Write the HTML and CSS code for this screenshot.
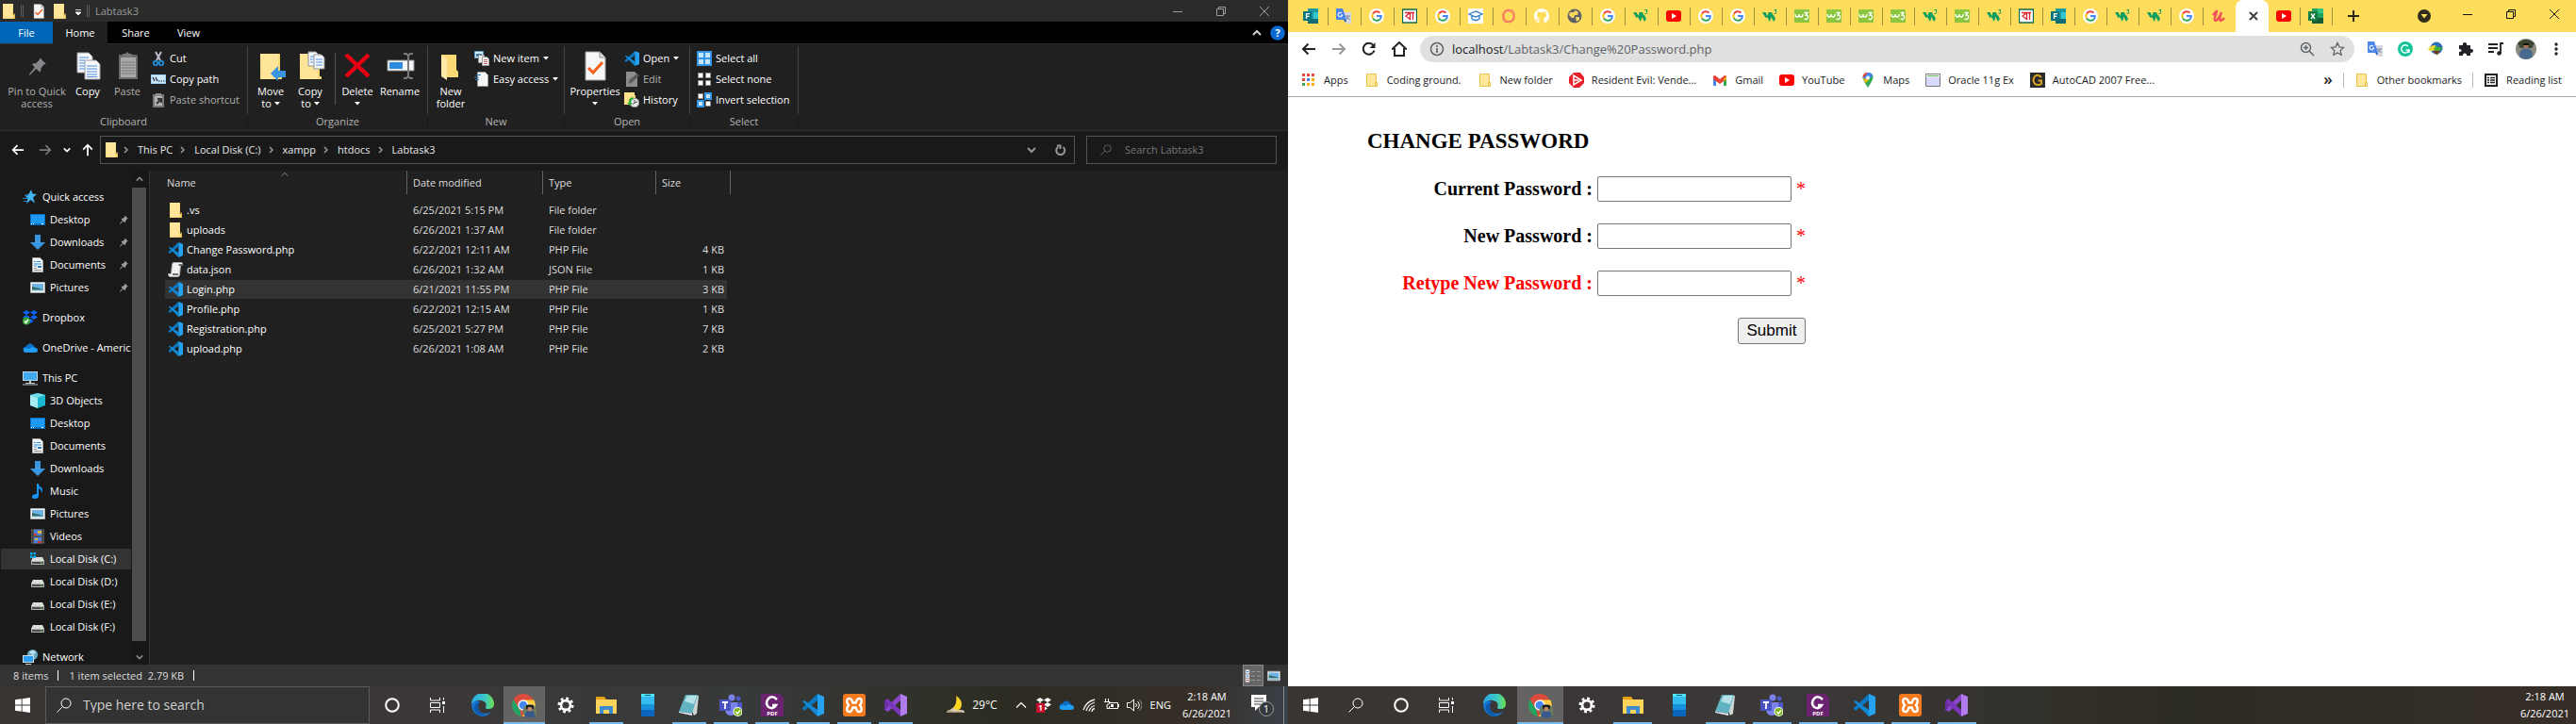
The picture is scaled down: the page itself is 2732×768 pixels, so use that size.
FILE: index.html
```html
<!DOCTYPE html>
<html lang="en">
<head>
<meta charset="utf-8">
<title>Labtask3 – Change Password</title>
<link rel="stylesheet" href="styles.css">
</head>
<body>
<svg class="paints" aria-hidden="true"><linearGradient id="eg"><stop offset="0" stop-color="#2ba6e3"/><stop offset=".6" stop-color="#3bc9c9"/><stop offset="1" stop-color="#6ade4a"/></linearGradient></svg>
<svg class="sprite" aria-hidden="true">
  <symbol id="folder" viewBox="0 0 16 16"><path d="M2 0h11v12h1.500v4H2z" fill="#f6d673"/><path d="M2 0h10.500v16H3z" fill="#ffe69a"/><path d="M12 11h2.500v5H3" fill="none" stroke="#e3b94a"/></symbol>
  <symbol id="bfolder" viewBox="0 0 16 16"><path d="M2.500 1.500h10v9h1v4h-11z" fill="#ffe79b" stroke="#e8c24b"/><path d="M11.500 14v-3.500h2" fill="none" stroke="#e8c24b"/></symbol>
  <symbol id="doccheck" viewBox="0 0 32 32"><path d="M6 1h15l6 6v24H6z" fill="#f5f6f8" stroke="#9a9da1"/><path d="M21 1v6h6" fill="#ddd" stroke="#8a8d91"/><path d="m9 18 5 5 10-11" fill="none" stroke="#f4611b" stroke-width="3"/></symbol>
  <symbol id="pin" viewBox="0 0 32 32"><path d="m20 4 9 9-3 1-4 5-1 6-6-5-9 9-1-1 8-10-4-5 6-1 5-5z" fill="currentColor"/></symbol>
  <symbol id="copy" viewBox="0 0 32 32"><g fill="#f7f8fa" stroke="#9fa2a6"><path d="M5 2h12l4 4v17H5z"/><path d="M13 10h12l4 4v16H13z"/></g><g stroke="#4a8ee6" stroke-width="1"><path d="M7 7h10M7 10h6M7 13h6M7 16h6M7 19h6M15 16h11M15 19h11M15 22h11M15 25h11M15 27.500h11"/></g></symbol>
  <symbol id="paste" viewBox="0 0 32 32"><path d="M7 4h18q2 0 2 2v24H7z" fill="#6a6a6c"/><rect x="9" y="7" width="16" height="21" fill="#a8a8aa"/><path d="M11 3h3l2-2 2 2h3v4H11z" fill="#77787a"/><path d="M10 12h14M10 15h14M10 18h14M10 21h14M10 24h14" stroke="#77787a"/></symbol>
  <symbol id="cut" viewBox="0 0 16 16"><path d="m5 1 5 9M11 1 6 10" stroke="#b9bec4" stroke-width="2"/><circle cx="5" cy="13" r="2.200" fill="none" stroke="#1f84c6" stroke-width="2"/><circle cx="11" cy="13" r="2.200" fill="none" stroke="#1f84c6" stroke-width="2"/></symbol>
  <symbol id="copypath" viewBox="0 0 16 16"><rect y="3" width="16" height="10" fill="#9ed0f5"/><rect x="1" y="4" width="14" height="8" fill="#c9e8fd"/><path d="m2 6 2 4M5 6l2 4M8 10h1.500M10.500 10H12M13 10h1.500" stroke="#16202a" stroke-width="1.200"/></symbol>
  <symbol id="pasteshort" viewBox="0 0 16 16"><path d="M2 2h12v14H2z" fill="#77787a"/><path d="M4 4h8v10H4z" fill="#b0b0b2"/><path d="M5 1h6v3H5z" fill="#8d8e90"/><path d="m6 12 4-4M7 7h4v4" fill="none" stroke="#333" stroke-width="2"/></symbol>
  <symbol id="bigfolder" viewBox="0 0 32 32"><path d="M5 3h21v24h2v3H5z" fill="#f9d975"/><path d="M5 3h19v27H6z" fill="#ffe597"/></symbol>
  <symbol id="moveto" viewBox="0 0 32 32"><use href="#bigfolder"/><path d="m16 24 8-8v5h8v7h-8v4z" fill="#3a94e0"/></symbol>
  <symbol id="copyto" viewBox="0 0 32 32"><use href="#bigfolder"/><g fill="#f7f8fa" stroke="#8e9196"><path d="M14 1h8l3 3v12H14z"/><path d="M20 4h8l3 3v12H20z"/></g><path d="M22 9h7M22 12h7M22 15h7M16 6h4M16 9h3M16 12h3" stroke="#4a8ee6"/></symbol>
  <symbol id="delete" viewBox="0 0 32 32"><path d="M4 4l24 23M28 4 4 27" stroke="#e60012" stroke-width="4.500"/></symbol>
  <symbol id="rename" viewBox="0 0 32 32"><path d="M3 10h28v11H3z" fill="#f5f6f8" stroke="#8d8f92"/><path d="M5 12h14v7H5z" fill="#2f8be0"/><path d="M20 3h3l2 2 2-2h3M25 5v22M20 29h3l2-2 2 2h3" fill="none" stroke="#77797c" stroke-width="2"/></symbol>
  <symbol id="newfolder" viewBox="0 0 32 32"><path d="M6 4h16v16l2 2v6H10z" fill="#f9d975"/><path d="m6 4 6 4v23l-6-4z" fill="#ffe9a8"/></symbol>
  <symbol id="newitem" viewBox="0 0 16 16"><path d="M.500.500h9v7h-9z" fill="#d4ecfb" stroke="#5e9cc8"/><path d="M2 3h6v3H2z" fill="#3a7aa6"/><path d="M4.500 4.500h6v8h-6z" fill="#ececec" stroke="#999"/><path d="M8.500 6.500h5l2 2v7h-7z" fill="#fafafa" stroke="#999"/><path d="M10 9.500h4M10 11.500h4M10 13.500h4" stroke="#c66"/></symbol>
  <symbol id="easy" viewBox="0 0 16 16"><path d="M3.500.500h8l3 3v12h-11z" fill="#f5f6f8" stroke="#999"/><path d="M2 3.500h5M0 6h5M1 8.500h4" stroke="#2b78b8"/></symbol>
  <symbol id="vscode" viewBox="0 0 24 24"><path d="M17 0v7L3 18l-2-2v-1z" fill="#0a77c0"/><path d="m1 8 2-1 14 10v7z" fill="#1289d6"/><path d="m17 0 7 3v18l-7 3z" fill="#26a3f0"/></symbol>
  <symbol id="edit" viewBox="0 0 16 16"><path d="M2 0h9l3 3v13H2z" fill="#8c8c8c"/><path d="m4 13 2-5 8-6 2 2-7 7z" fill="#5b5b5b"/></symbol>
  <symbol id="history" viewBox="0 0 16 16"><path d="M0 0h11v3h1v10H0z" fill="#ffe18a"/><circle cx="11" cy="11" r="4.800" fill="#e4e6e8" stroke="#8a8c8f"/><path d="M11 8v3l3-1M9 13l2-2" stroke="#555" fill="none"/><path d="M9 5Q4 6 5 11H3l3 3 3-3H7Q7 8 10 7z" fill="#2cae34"/></symbol>
  <symbol id="selall" viewBox="0 0 16 16"><path d="M0 0h16v16H0z" fill="#3596e6"/><path d="M2 2h5v5H2zM9 2h5v5H9zM2 9h5v5H2zM9 9h5v5H9z" fill="#c5e5fc"/></symbol>
  <symbol id="selnone" viewBox="0 0 16 16"><path d="M1.500 1.500h5v5h-5zM9.500 1.500h5v5h-5zM1.500 9.500h5v5h-5zM9.500 9.500h5v5h-5z" fill="#fff" stroke="#8f8f8f"/></symbol>
  <symbol id="selinv" viewBox="0 0 16 16"><path d="M1.500 1.500h5v5h-5zM9.500 9.500h5v5h-5z" fill="#fff" stroke="#8f8f8f"/><path d="M9 1h6v6H9zM1 9h6v6H1z" fill="#c5e5fc" stroke="#3596e6" stroke-width="2"/></symbol>
  <symbol id="star4" viewBox="0 0 16 16"><path d="m9 0 1.500 4.500L15 5l-4 3.500 2 6L8.500 11 4 15l1.500-5.500L2 6l4.500-1z" fill="#45b4f5"/><path d="M0 9.500h5M1 12.500h4M2 6.500h4" stroke="#1b7fc8"/></symbol>
  <symbol id="desktop" viewBox="0 0 16 16"><path d="M0 2h16v12H0z" fill="#0b6fc0"/><path d="M1 3h14v9H1z" fill="#1e9bf7"/><path d="M1 12.500h1M3 12.500h1M12 12.500h2" stroke="#fff"/></symbol>
  <symbol id="down" viewBox="0 0 16 16"><path d="M5 0h6v8h5l-8 8-8-8h5z" fill="#3b97e3"/></symbol>
  <symbol id="document" viewBox="0 0 16 16"><path d="M2.500.500h8l3 3v12h-11z" fill="#f8f8f8" stroke="#a7a7a7"/><path d="M4 4.500h2M7 4.500h4M4 7h8M4 9h3" stroke="#1e8bdc"/><path d="M8 9h4v2H8z" fill="#2b7bb5"/><path d="M4 11.500h3M4 13.500h8" stroke="#888"/></symbol>
  <symbol id="picture" viewBox="0 0 16 16"><path d="M.500 2.500h15v11H.500z" fill="#f4f4f4" stroke="#aaa"/><path d="M2 4h12v8H2z" fill="#6fb2e6"/><path d="m2 7 12 3v2H2z" fill="#2f6d66"/><path d="M2 10.500h12V12H2z" fill="#a9d4f1"/></symbol>
  <symbol id="dropbox" viewBox="0 0 16 16"><path d="m4 0 4 2.500L4 5 0 2.500zM12 0l4 2.500L12 5 8 2.500zM4 5l4 2.500L4 10 0 7.500zM12 5l4 2.500-4 2.500-4-2.500zM8 9l4 2.500L8 14l-4-2.500z" fill="currentColor"/></symbol>
  <symbol id="dropok" viewBox="0 0 16 16"><g color="#0b63f3"><use href="#dropbox"/></g><circle cx="4" cy="11.500" r="4" fill="#37a635"/><path d="m2 11.500 1.500 2L6 10" stroke="#fff" fill="none" stroke-width="1.500"/></symbol>
  <symbol id="onedrive" viewBox="0 0 16 16"><path d="M4 6q3-5 7-1l3 3-12 4Q-2 8 4 6z" fill="#0a6cc4"/><path d="M3 13q-3-1-2-3.500Q4 7 7 9q2-3 6-1 3 0 3 2.500T13 13z" fill="#1f9df0"/></symbol>
  <symbol id="pc" viewBox="0 0 16 16"><path d="M0 1h16v10H0z" fill="#c3d4df"/><path d="M1 2h14v8H1z" fill="#3fa9f5"/><path d="M7 11h2v2h4v1H3v-1h4z" fill="#c3cbd0"/><path d="M0 15h16" stroke="#b7c3cc"/></symbol>
  <symbol id="cube" viewBox="0 0 16 16"><path d="m8 0 8 2v11l-8 3-8-3V2z" fill="#19b7d0"/><path d="m8 5-8-3v11l8 3z" fill="#a8ecf3"/><path d="m0 2 8-2 8 2-8 3z" fill="#6fdbe8"/></symbol>
  <symbol id="note" viewBox="0 0 16 16"><path d="M7 0h2q0 3 3 4 2 3 0 6 0-4-3-5v8q0 3-4 3-3 0-3-2 0-3 5-3z" fill="#1795f5"/></symbol>
  <symbol id="video" viewBox="0 0 16 16"><path d="M1 0h14v16H1z" fill="#565656"/><path d="M4 1h8v6H4zM4 9h8v6H4z" fill="#4a7fe0"/><path d="M4 5h3v2H4zM8 13h4v2H8z" fill="#c93a3a"/><path d="M8 2h4v3H8zM5 10h3v2H5z" fill="#d9b53a"/><path d="M2.500 0v16M13.500 0v16" stroke="#222" stroke-dasharray="1.500 1.500"/></symbol>
  <symbol id="disk" viewBox="0 0 16 16"><path d="m3 6h10l2 4H1z" fill="#dcdcdc"/><path d="M1 10h14v4H1z" fill="#b4b4b4"/><path d="M2 11h12v2H2z" fill="#4b4b4b"/><path d="M11 12h1.500" stroke="#4df04d"/></symbol>
  <symbol id="diskc" viewBox="0 0 16 16"><use href="#disk"/><path d="M0 1h2.500v2.500H0zM3.500 1H6v2.500H3.500zM0 4.500h2.500V7H0zM3.500 4.500H6V7H3.500z" fill="#00b3f0"/></symbol>
  <symbol id="network" viewBox="0 0 16 16"><circle cx="10.500" cy="5.500" r="5.500" fill="#6aa9c4"/><path d="M7 3q4-4 7 0l-3 3z" fill="#b9e0ee"/><path d="M0 6h12v8H0z" fill="#d1dde5"/><path d="M1 7h10v6H1z" fill="#2a9df4"/><path d="M3 15.500h6" stroke="#ccc"/></symbol>
  <symbol id="json" viewBox="0 0 16 16"><path d="M6.500.500h8q1.500 0 1 3h-2l-1 10q-.500 2-2 2h-8q-2 0-2-3h3L4.500 3q0-2.500 2-2.500z" fill="#f2f2f2" stroke="#aaa"/><path d="M5 13h6M11.500 3h4" stroke="#444" stroke-width="1.500"/></symbol>
  <symbol id="search" viewBox="0 0 16 16"><circle cx="10" cy="6" r="5" fill="none" stroke="currentColor"/><path d="m6.500 9.500-6 6" stroke="currentColor"/></symbol>
  <symbol id="chevd" viewBox="0 0 10 10"><path d="m1 3 4 4 4-4" fill="none" stroke="currentColor" stroke-width="2"/></symbol>
  <symbol id="chevu" viewBox="0 0 10 10"><path d="m1 7 4-4 4 4" fill="none" stroke="currentColor" stroke-width="2"/></symbol>
  <symbol id="thinu" viewBox="0 0 12 12"><path d="m1 8.500 5-5 5 5" fill="none" stroke="currentColor" stroke-width="1.200"/></symbol>
  <symbol id="chevr" viewBox="0 0 10 10"><path d="m3 2 3 3-3 3" fill="none" stroke="currentColor" stroke-width="1.500"/></symbol>
  <symbol id="caret" viewBox="0 0 6 6"><path d="M0 1h6L3 4.500z" fill="currentColor"/></symbol>
  <symbol id="qatmenu" viewBox="0 0 8 8"><path d="M1 1.500h6M1 4h6L4 7z" fill="currentColor" stroke="currentColor" stroke-width=".8"/></symbol>
  <symbol id="arrow" viewBox="0 0 16 16"><path d="M15 8H2M7.500 2.500 2 8l5.500 5.500" fill="none" stroke="currentColor" stroke-width="2"/></symbol>
  <symbol id="min" viewBox="0 0 10 10"><path d="M0 5.500h10" stroke="currentColor"/></symbol>
  <symbol id="restore" viewBox="0 0 10 10"><path d="M.500 2.500h7v7h-7zM2.500 2.500v-2h7v7h-2" fill="none" stroke="currentColor"/></symbol>
  <symbol id="close" viewBox="0 0 10 10"><path d="m0 0 10 10M10 0 0 10" stroke="currentColor"/></symbol>
  <symbol id="reload" viewBox="0 0 16 16"><path d="M13.500 9.500A6 6 0 1 1 12.500 4" fill="none" stroke="currentColor" stroke-width="2"/><path d="M14.500 1v6h-6z" fill="currentColor"/></symbol>
  <symbol id="home" viewBox="0 0 16 16"><path d="M0 8.500 8 1l8 7.500M3 7v8h10V7" fill="none" stroke="currentColor" stroke-width="2"/></symbol>
  <symbol id="refresh" viewBox="0 0 12 12"><path d="M3 3a4.500 4.500 0 1 0 5.500 0M2 1.500h3.500V5" fill="none" stroke="currentColor" stroke-width="2"/></symbol>
  <symbol id="win" viewBox="0 0 16 16"><path d="m0 2.300 6.700-1v6.200H0zM7.600 1.200 16 0v7.500H7.600zM0 8.500h6.700v6.200L0 13.700zM7.600 8.500H16V16l-8.400-1.200z" fill="#fff"/></symbol>
  <symbol id="cortana" viewBox="0 0 16 16"><circle cx="8" cy="8" r="6.800" fill="none" stroke="#fff" stroke-width="2"/></symbol>
  <symbol id="taskview" viewBox="0 0 16 16"><path d="M.500 0v3h10V0M.500 5.500h10v5H.500zM.500 16v-3h10v3M14.500 0v2.500M14.500 9v7" fill="none" stroke="#fff"/><path d="M13 4h3v3h-3z" fill="#fff"/></symbol>
  <symbol id="edge" viewBox="0 0 24 24"><path d="M0 11A12 12 0 0 1 24 11q0 5-6 5-3 0-3-1.500 2-5-3-7Q6 5 0 11z" fill="url(#eg)"/><path d="M0 12Q3 6 9 8q-4 5 0 11 4 4 12 0-4 5-10 5Q1 22 0 12z" fill="#1678d4"/><path d="M9 8q-3 3-2 7 2 7 9 8-8 2-12-4Q0 12 9 8z" fill="#0d59ab"/></symbol>
  <symbol id="chrome" viewBox="0 0 24 24"><circle cx="11" cy="12" r="11" fill="#dd4b3e"/><path d="M1.500 6.500 8 17l1 6A11 11 0 0 1 1.500 6.500z" fill="#1fa463"/><path d="M11 7h10.500A11 11 0 0 1 10 23l6-9z" fill="#ffcd40"/><circle cx="11" cy="12" r="5.200" fill="#fff"/><circle cx="11" cy="12" r="4" fill="#4587f3"/><g><circle cx="17.500" cy="18" r="7" fill="#6c7a62"/><path d="M12.500 23q0-6 5-6t5 6q-5 4-10 0z" fill="#37598c"/><path d="M14 12h7v4h-7z" fill="#181818"/><circle cx="17.500" cy="16" r="2.300" fill="#b98865"/></g></symbol>
  <symbol id="gear" viewBox="0 0 20 20"><circle cx="10" cy="10" r="5.500" fill="none" stroke="#fff" stroke-width="3"/><circle cx="10" cy="10" r="8" fill="none" stroke="#fff" stroke-width="3" stroke-dasharray="3.140 3.140"/></symbol>
  <symbol id="explorer" viewBox="0 0 24 24"><path d="M1 3h9l2 3h11v4H1z" fill="#e2a012"/><path d="M1 6h22v15H1z" fill="#fcd35b"/><path d="M5 13h14v8h-4v-4H9v4H5z" fill="#3d8bd0"/></symbol>
  <symbol id="phone" viewBox="0 0 24 24"><path d="M5 0h14v24H5z" fill="#0a66bd"/><path d="M5 0h14v17H5z" fill="#1791dc"/><path d="M5 0h14v11H5z" fill="#33bdf0"/><path d="M5 0h14v3H5z" fill="#50e4f7"/><path d="M9 1.500h6" stroke="#0b5a8a"/></symbol>
  <symbol id="notepad" viewBox="0 0 24 24"><path d="M8 2h14l-2 19-3 2z" fill="#cdd5d6"/><path d="M8 1h13l-6 20-14-2z" fill="#62b3c2"/><path d="M10 2h10l-3 9-10-3z" fill="#b5e0e6"/><path d="m1 19 14 2v2L1 20z" fill="#f1f1f1"/></symbol>
  <symbol id="teams" viewBox="0 0 24 24"><circle cx="13" cy="4" r="3.500" fill="#7b83eb"/><circle cx="20" cy="5" r="2.500" fill="#5059c9"/><path d="M17 9h7v7q-2 4-6 3z" fill="#5059c9"/><path d="M7 9h12v8q-2 6-7 6t-6-6z" fill="#7b83eb"/><path d="M0 6h12v12H0z" fill="#4b53bc"/><path d="M3 9h6M6 9v7" stroke="#fff" stroke-width="1.800"/><circle cx="19.500" cy="19" r="5" fill="#fff"/><circle cx="19.500" cy="19" r="4" fill="#7cb518"/><path d="m17.500 19 1.500 2 3-3.500" stroke="#fff" fill="none" stroke-width="1.500"/></symbol>
  <symbol id="foxit" viewBox="0 0 24 24"><path d="M0 0h20l4 4v20H0z" fill="#6b2370"/><path d="M17 6Q12 1 8 5q-4 5 0 9 5 3 8-2h-4" fill="none" stroke="#fff" stroke-width="2.500"/><text x="12" y="23" text-anchor="middle" font-family="Open Sans" font-weight="700" font-size="6" fill="#fff">PDF</text></symbol>
  <symbol id="xampp" viewBox="0 0 24 24"><rect width="24" height="24" rx="3" fill="#f47a20"/><path d="M5 5.500q3-1.500 4.500 1.500l1 2.500h3l1-2.500Q16 4 19 5.500q2 2.500-1 6.500 3 4 1 6.500-3 1.500-4.500-1.500l-1-2.500h-3l-1 2.500Q8 20 5 18.500q-2-2.500 1-6.500-3-4-1-6.500z" fill="none" stroke="#fff" stroke-width="2.500"/></symbol>
  <symbol id="vs" viewBox="0 0 24 24"><path d="M17 0v7L4 19l-4-2v-1z" fill="#8a45c8"/><path d="m0 8 3-3 14 12v7z" fill="#7a35bb"/><path d="M0 7v10l3-2V9z" fill="#6a2fa5"/><path d="m17 0 7 3v18l-7 3z" fill="#b07bea"/></symbol>
  <symbol id="moon" viewBox="0 0 20 20"><path d="M11 0q8 5 5 13-4 5-13 3 10-4 8-16z" fill="#fdd41f"/><path d="M1 18q0-3 4-3 3-4 6 0h5q4 0 4 3z" fill="#d8cdb8"/><path d="M1 18q0-3 4-2l5 1q6-2 9 1z" fill="#a8977c"/></symbol>
  <symbol id="dropred" viewBox="0 0 16 16"><g color="#fff"><use href="#dropbox"/></g><path d="M0 6h9v10H0z" fill="#c8102e"/><text x="4.500" y="14" text-anchor="middle" font-family="Open Sans" font-weight="700" font-size="8" fill="#fff">1</text></symbol>
  <symbol id="wifi" viewBox="0 0 16 16"><path d="M2 13Q5 4 14 2M5 14Q7 7 14 5M8 14.500Q9 10 14 8.500M11 15q0-3 3-3.500" fill="none" stroke="#eee" stroke-width="1.300"/></symbol>
  <symbol id="battery" viewBox="0 0 16 16"><path d="M5 5.500h9.500v6H5.500V9M15.500 7v3M1.500 1v3M4.500 1v3M0 4.500h6q0 3-3 3v4h2" fill="none" stroke="#fff"/><path d="M7 7h3v3H7z" fill="#fff"/></symbol>
  <symbol id="volume" viewBox="0 0 16 16"><path d="M.500 5.500h3l4-3.500v12l-4-3.500h-3zM9.500 6q2 2 0 4M11.500 4q3.500 4 0 8" fill="none" stroke="#fff"/><path d="M13.500 2q5 6 0 12" fill="none" stroke="#888"/></symbol>
  <symbol id="notif" viewBox="0 0 24 24"><path d="M0 1h16v13H8l-4 4v-4H0z" fill="#fff"/><path d="M3 5h10M3 8h10M3 11h7" stroke="#3a3d40"/><circle cx="16" cy="16" r="7.500" fill="#33383c" stroke="#999"/><text x="16" y="20" text-anchor="middle" font-family="Open Sans" font-size="11" fill="#fff">1</text></symbol>
  <symbol id="forms" viewBox="0 0 16 16"><path d="M5 0h11v16H5z" fill="#1a9ba1"/><path d="M11 4h5v7h-5z" fill="#37c6d0"/><path d="M5 11h11v5H5z" fill="#0c6a70"/><path d="M0 3h9v10H0z" fill="#02747b"/><path d="M3.500 11V5.700H7M3.500 8.300h3" fill="none" stroke="#fff" stroke-width="1.300"/></symbol>
  <symbol id="excel" viewBox="0 0 16 16"><path d="M4 0h12v16H4z" fill="#21a366"/><path d="M10 0h6v5h-6z" fill="#33c481"/><path d="M4 10h12v6H4z" fill="#185c37"/><path d="M0 3h10v10H0z" fill="#107c41"/><path d="m3 5.500 4 5.500M7 5.500 3 11" stroke="#fff" stroke-width="1.300"/></symbol>
  <symbol id="translate" viewBox="0 0 16 16"><path d="M7 4h9v12h-5z" fill="#d5d8de"/><path d="m10 12 4-4M9 8h6M11 8q1 3 4 4" stroke="#7b8aa3" fill="none"/><path d="M0 0h7l4 12H1q-1 0-1-1z" fill="#4a86ec"/><path d="M6 5a2.200 2.200 0 1 0 .5 2H5" fill="none" stroke="#fff" stroke-width="1.100"/><path d="M8 12h3l-1 3z" fill="#2c5fc4"/></symbol>
  <symbol id="google" viewBox="0 0 16 16"><circle cx="8" cy="8" r="8" fill="#fff"/><g fill="none" stroke-width="2"><path d="M4 5.500A5 5 0 0 1 11.500 4.500" stroke="#ea4335"/><path d="M4 5.500a5 5 0 0 0 0 5" stroke="#fbbc05"/><path d="M4 10.500a5 5 0 0 0 7.500 1" stroke="#34a853"/><path d="M11.500 11.500Q13 10 12.800 8H8" stroke="#4285f4"/></g></symbol>
  <symbol id="bangla" viewBox="0 0 16 16"><path d="M.500 1h15v14H.500z" fill="#fff" stroke="#0d6b4d" stroke-width="1.300"/><path d="M3 4.500h10M8.500 4.500 4 8l4.500 3.500V4.500M11.500 4.500V12" fill="none" stroke="#dc2330" stroke-width="1.300"/></symbol>
  <symbol id="cap" viewBox="0 0 16 16"><path d="M0 0h16v16H0z" fill="#fff"/><path d="m1 6 7-3 7 3-7 3zM4 8v3q4 3 8 0V8" fill="none" stroke="#2b78c5" stroke-width="1.300"/></symbol>
  <symbol id="swirl" viewBox="0 0 16 16"><g fill="none" stroke="#f98a4b"><ellipse cx="8" cy="8" rx="7" ry="5" transform="rotate(35 8 8)"/><ellipse cx="8" cy="8" rx="7" ry="5" transform="rotate(80 8 8)"/><ellipse cx="8" cy="8" rx="7" ry="5.500" transform="rotate(130 8 8)" stroke="#f0617a"/></g></symbol>
  <symbol id="github" viewBox="0 0 16 16"><path d="M8 0a8 8 0 0 0-2.500 15.600V13q-2.500.500-3-1.500l-1-1q2-.500 2.500 1 .5.500 1.500.500l.500-1.200Q3 10 3 7l.8-2-.2-2.200L6 4h4l2.400-1.200-.2 2.200.8 2q0 3-3 3.800.5.700.5 1.700v3.100A8 8 0 0 0 8 0z" fill="#fff"/></symbol>
  <symbol id="globe" viewBox="0 0 16 16"><circle cx="8" cy="8" r="7.500" fill="#5f6368"/><path d="M3 4h4l2-2 3 2-1 3H8l-1 3H5L2 7zM9 9h4v3l-3 2z" fill="#f6d65d"/></symbol>
  <symbol id="w3" viewBox="0 0 16 16"><path d="M0 4h3.500l2 4 1-4H10l1.500 3.500L12 7l2 4-2 3-2.500-5L8 14 5 9 3.500 10z" fill="#0b9f60"/><path d="M12.500 1.500H15l-1 1.500q2 1 0 2.500h-1.500" fill="none" stroke="#0b9f60"/></symbol>
  <symbol id="ww3" viewBox="0 0 16 16"><rect y="1" width="16" height="14" rx="1" fill="#8cc63f"/><path d="M1 6q0 3 2 3t2-3q0 3 2 3t2-3M10.500 4.500H14L12 7q3 0 2.500 2.500-1 3-4 1.500" fill="none" stroke="#fff" stroke-width="1.300"/></symbol>
  <symbol id="youtube" viewBox="0 0 16 16"><rect y="2" width="16" height="12" rx="3" fill="#f00"/><path d="m6 5 5 3-5 3z" fill="#fff"/></symbol>
  <symbol id="udemy" viewBox="0 0 16 16"><path d="M2 7q3-4 4-4 0 2-2 6-1 4 1 4 3-2 6-9-3 9-1 9 2 0 4-3" fill="none" stroke="#ef5258" stroke-width="2.300"/></symbol>
  <symbol id="info" viewBox="0 0 16 16"><circle cx="8" cy="8" r="6.500" fill="none" stroke="#5f6368" stroke-width="1.500"/><path d="M8 7v5M8 4v2" stroke="#5f6368" stroke-width="1.700"/></symbol>
  <symbol id="zoomin" viewBox="0 0 16 16"><circle cx="6.500" cy="6.500" r="5" fill="none" stroke="#5f6368" stroke-width="1.500"/><path d="m10 10 5 5M4 6.500h5M6.500 4v5" stroke="#5f6368" stroke-width="1.500"/></symbol>
  <symbol id="star" viewBox="0 0 16 16"><path d="m8 1.500 2 4.300 4.700.600-3.500 3.200.9 4.700L8 12l-4.100 2.300.9-4.700L1.300 6.400 6 5.800z" fill="none" stroke="#5f6368" stroke-width="1.300"/></symbol>
  <symbol id="grammarly" viewBox="0 0 16 16"><circle cx="8" cy="8" r="8" fill="#15c39a"/><path d="M11 5a4.200 4.200 0 1 0 1 4H8.500M12 9v3" fill="none" stroke="#fff" stroke-width="1.400"/></symbol>
  <symbol id="idm" viewBox="0 0 16 16"><circle cx="9" cy="7" r="6.500" fill="#2a6fb8"/><path d="M0 8q5-6 9-3l-1 5H2z" fill="#e8d63c"/><path d="m8 5 8 2-4 3-2 5-4-6z" fill="#3fae36"/><path d="M5 10h8l-4 4z" fill="#8a2f20"/></symbol>
  <symbol id="puzzle" viewBox="0 0 16 16"><path d="M1 4h4q-.500-3 2-3t2 3h4v4q3-.500 3 1.800T13 12v3H9q.300-2.500-2-2.500T5 15H1v-4q2.500.300 2.500-1.500T1 8z" fill="#202124"/></symbol>
  <symbol id="playlist" viewBox="0 0 16 16"><path d="M0 3h10M0 7h10M0 11h6M13 13V2h3" fill="none" stroke="#202124" stroke-width="1.800"/><circle cx="11.500" cy="12.500" r="2.300" fill="#202124"/></symbol>
  <symbol id="avatar" viewBox="0 0 22 22"><circle cx="11" cy="11" r="11" fill="#8a8a80"/><path d="M2 5q9-8 18 0l-3 5H5z" fill="#39452f"/><path d="M4 19q0-9 7-9t7 9q-7 6-14 0z" fill="#48698f"/><circle cx="11" cy="8" r="2.700" fill="#a5765d"/><path d="M8 5h6v2H8z" fill="#15110f"/></symbol>
  <symbol id="dots" viewBox="0 0 16 16"><g fill="#202124"><circle cx="8" cy="3" r="1.700"/><circle cx="8" cy="8" r="1.700"/><circle cx="8" cy="13" r="1.700"/></g></symbol>
  <symbol id="apps" viewBox="0 0 16 16"><path d="M1 1h3v3H1zM6 1h3v3H6zM11 1h3v3h-3zM1 6h3v3H1z" fill="#e8453c"/><path d="M6 6h3v3H6z" fill="#4285f4"/><path d="M11 6h3v3h-3zM6 11h3v3H6zM11 11h3v3h-3z" fill="#f9ab00"/><path d="M1 11h3v3H1z" fill="#34a853"/></symbol>
  <symbol id="resident" viewBox="0 0 16 16"><path d="M5 0h7l4 5v6l-5 5H5l-5-5V5z" fill="#e8202a"/><path d="M5 3v10l8-5zM5 8h5" fill="none" stroke="#fff" stroke-width="1.500"/></symbol>
  <symbol id="gmail" viewBox="0 0 16 16"><path d="M1 4v10h3V7z" fill="#4285f4"/><path d="M12 7v7h3V4z" fill="#34a853"/><path d="M1 3.500 3 3l5 4 5-4 2 .500V7l-7 5-7-5z" fill="#ea4335"/><path d="m12 7 3-3v3l-3 2z" fill="#fbbc04"/></symbol>
  <symbol id="maps" viewBox="0 0 16 16"><path d="M8 0q6 0 5.500 6Q12 10 8 16 4 10 2.500 6 2.500 0 8 0z" fill="#34a853"/><path d="M8 0Q2.500 0 2.500 5.500L8 2z" fill="#ea4335"/><path d="M8 0q4 0 5 3L6 10 3 6z" fill="#4285f4"/><path d="M3 6q1 3 3 5l3-4z" fill="#fbbc04"/><circle cx="8" cy="5.500" r="2" fill="#fff"/></symbol>
  <symbol id="oracle" viewBox="0 0 16 16"><path d="M.500 1.500h15v13H.500z" fill="#d9d9ff" stroke="#777"/><path d="M1 2h14v3H1z" fill="#fff"/><path d="M2 3.500h12" stroke="#52b04b"/></symbol>
  <symbol id="autocad" viewBox="0 0 16 16"><path d="M0 0h16v16H0z" fill="#2b2b2b"/><path d="M12 5Q8 1 5 4q-3 4 0 8 4 2 7 0V8.500H8.500" fill="none" stroke="#d9a520" stroke-width="2"/></symbol>
  <symbol id="list" viewBox="0 0 16 16"><path d="M2 2h12v12H2z" fill="none" stroke="#202124" stroke-width="2"/><path d="M4 5.500h2M7 5.500h5M4 8h2M7 8h5M4 10.500h2M7 10.500h5" stroke="#202124" stroke-width="1.300"/></symbol>
  <symbol id="dropdown" viewBox="0 0 16 16"><circle cx="8" cy="8" r="7" fill="#2f2b1d"/><path d="M4.500 6h7L8 10.500z" fill="#ffdd5c"/></symbol>
  <symbol id="plus" viewBox="0 0 12 12"><path d="M6 0v12M0 6h12" stroke="#2a2718" stroke-width="2"/></symbol>
  <symbol id="tabx" viewBox="0 0 10 10"><path d="m1 1 8 8M9 1 1 9" stroke="#3c4043" stroke-width="2"/></symbol>
  <symbol id="details" viewBox="0 0 18 14"><path d="M1 .500h4v4H1zM1 5h4v4H1zM1 9.500h4v4H1z" fill="#fff" stroke="#aaa"/><path d="M2 2.500h2M2 7h2" stroke="#2a7ad0"/><path d="M2 11.500h2" stroke="#d03a2a"/><path d="M7 2.500h4M13 2.500h4M7 7h4M13 7h4M7 11.500h4M13 11.500h4" stroke="#999"/></symbol>
  <symbol id="help" viewBox="0 0 16 16"><circle cx="8" cy="8" r="7.800" fill="#0a6ad1"/><text x="8" y="12" text-anchor="middle" font-family="Open Sans" font-weight="700" font-size="11" fill="#fff">?</text></symbol>
</svg>

<main class="desk">
<section class="screen" aria-label="File Explorer">
  <div class="explorer">
    <header class="titlebar">
      <svg class="i16"><use href="#folder"/></svg><span class="bar2"></span>
      <svg class="i16"><use href="#doccheck"/></svg><svg class="i16"><use href="#folder"/></svg>
      <svg class="i8 light"><use href="#qatmenu"/></svg><span class="bar2"></span><span class="wtitle">Labtask3</span>
      <span class="grow"></span>
      <button class="wbtn" aria-label="Minimize"><svg class="i10"><use href="#min"/></svg></button>
      <button class="wbtn" aria-label="Restore"><svg class="i10"><use href="#restore"/></svg></button>
      <button class="wbtn" aria-label="Close"><svg class="i10"><use href="#close"/></svg></button>
    </header>
    <nav class="rtabs">
      <button class="rtab file">File</button><button class="rtab home">Home</button><button class="rtab share">Share</button><button class="rtab view">View</button>
      <span class="grow"></span>
      <button class="bare" aria-label="Collapse ribbon"><svg class="i10"><use href="#chevu"/></svg></button>
      <button class="bare" aria-label="Help"><svg class="i16"><use href="#help"/></svg></button>
    </nav>
    <div class="ribbon">
      <div class="rgroup g-clip"><div class="rbody">
        <button class="big w66 off"><svg class="i32 pad"><use href="#pin"/></svg>Pin to Quick<br>access</button>
        <button class="big"><svg class="i32"><use href="#copy"/></svg>Copy</button>
        <button class="big off"><svg class="i32"><use href="#paste"/></svg>Paste</button>
        <div class="smalls">
          <button class="small"><svg class="i16"><use href="#cut"/></svg>Cut</button>
          <button class="small"><svg class="i16"><use href="#copypath"/></svg>Copy path</button>
          <button class="small off"><svg class="i16"><use href="#pasteshort"/></svg>Paste shortcut</button>
        </div></div><div class="rlabel">Clipboard</div></div>
      <div class="rgroup g-org"><div class="rbody">
        <button class="big"><svg class="i32"><use href="#moveto"/></svg>Move<br>to <svg class="i6"><use href="#caret"/></svg></button>
        <button class="big"><svg class="i32"><use href="#copyto"/></svg>Copy<br>to <svg class="i6"><use href="#caret"/></svg></button>
        <span class="vsep"></span>
        <button class="big"><svg class="i32"><use href="#delete"/></svg>Delete<br><svg class="i6"><use href="#caret"/></svg></button>
        <button class="big w48"><svg class="i32"><use href="#rename"/></svg>Rename</button>
        </div><div class="rlabel">Organize</div></div>
      <div class="rgroup g-new"><div class="rbody">
        <button class="big"><svg class="i32"><use href="#newfolder"/></svg>New<br>folder</button>
        <div class="smalls">
          <button class="small"><svg class="i16"><use href="#newitem"/></svg>New item <svg class="i6"><use href="#caret"/></svg></button>
          <button class="small"><svg class="i16"><use href="#easy"/></svg>Easy access <svg class="i6"><use href="#caret"/></svg></button>
        </div></div><div class="rlabel">New</div></div>
      <div class="rgroup g-open"><div class="rbody">
        <button class="big w54"><svg class="i32"><use href="#doccheck"/></svg>Properties<br><svg class="i6"><use href="#caret"/></svg></button>
        <div class="smalls">
          <button class="small"><svg class="i16"><use href="#vscode"/></svg>Open <svg class="i6"><use href="#caret"/></svg></button>
          <button class="small off"><svg class="i16"><use href="#edit"/></svg>Edit</button>
          <button class="small"><svg class="i16"><use href="#history"/></svg>History</button>
        </div></div><div class="rlabel">Open</div></div>
      <div class="rgroup g-sel"><div class="rbody">
        <div class="smalls">
          <button class="small"><svg class="i16"><use href="#selall"/></svg>Select all</button>
          <button class="small"><svg class="i16"><use href="#selnone"/></svg>Select none</button>
          <button class="small"><svg class="i16"><use href="#selinv"/></svg>Invert selection</button>
        </div></div><div class="rlabel">Select</div></div>
    </div>
    <div class="navbar">
      <div class="navbtns">
        <button class="bare" aria-label="Back"><svg class="i14"><use href="#arrow"/></svg></button>
        <button class="bare dim" aria-label="Forward"><svg class="i14 flip"><use href="#arrow"/></svg></button>
        <button class="bare" aria-label="Recent"><svg class="i8"><use href="#chevd"/></svg></button>
        <button class="bare" aria-label="Up"><svg class="i14 up"><use href="#arrow"/></svg></button>
      </div>
      <div class="address">
        <svg class="i16"><use href="#folder"/></svg>
        <svg class="i10"><use href="#chevr"/></svg><a href="#">This PC</a>
        <svg class="i10"><use href="#chevr"/></svg><a href="#">Local Disk (C:)</a>
        <svg class="i10"><use href="#chevr"/></svg><a href="#">xampp</a>
        <svg class="i10"><use href="#chevr"/></svg><a href="#">htdocs</a>
        <svg class="i10"><use href="#chevr"/></svg><a href="#">Labtask3</a>
        <span class="grow"></span>
        <button class="bare" aria-label="History"><svg class="i10"><use href="#chevd"/></svg></button>
        <button class="bare" aria-label="Refresh"><svg class="i12"><use href="#refresh"/></svg></button>
      </div>
      <label class="find"><svg class="i12"><use href="#search"/></svg><input type="text" placeholder="Search Labtask3" aria-label="Search Labtask3"></label>
    </div>
    <div class="panes">
      <nav class="tree">
        <div class="tgroup">
          <a href="#" class="titem top"><svg class="i16"><use href="#star4"/></svg>Quick access</a>
          <a href="#" class="titem"><svg class="i16"><use href="#desktop"/></svg>Desktop<svg class="i12 tpin"><use href="#pin"/></svg></a>
          <a href="#" class="titem"><svg class="i16"><use href="#down"/></svg>Downloads<svg class="i12 tpin"><use href="#pin"/></svg></a>
          <a href="#" class="titem"><svg class="i16"><use href="#document"/></svg>Documents<svg class="i12 tpin"><use href="#pin"/></svg></a>
          <a href="#" class="titem"><svg class="i16"><use href="#picture"/></svg>Pictures<svg class="i12 tpin"><use href="#pin"/></svg></a>
        </div>
        <div class="tgroup"><a href="#" class="titem top"><svg class="i16"><use href="#dropok"/></svg>Dropbox</a></div>
        <div class="tgroup"><a href="#" class="titem top"><svg class="i16"><use href="#onedrive"/></svg>OneDrive - Americ</a></div>
        <div class="tgroup">
          <a href="#" class="titem top"><svg class="i16"><use href="#pc"/></svg>This PC</a>
          <a href="#" class="titem"><svg class="i16"><use href="#cube"/></svg>3D Objects</a>
          <a href="#" class="titem"><svg class="i16"><use href="#desktop"/></svg>Desktop</a>
          <a href="#" class="titem"><svg class="i16"><use href="#document"/></svg>Documents</a>
          <a href="#" class="titem"><svg class="i16"><use href="#down"/></svg>Downloads</a>
          <a href="#" class="titem"><svg class="i16"><use href="#note"/></svg>Music</a>
          <a href="#" class="titem"><svg class="i16"><use href="#picture"/></svg>Pictures</a>
          <a href="#" class="titem"><svg class="i16"><use href="#video"/></svg>Videos</a>
          <a href="#" class="titem sel"><svg class="i16"><use href="#diskc"/></svg>Local Disk (C:)</a>
          <a href="#" class="titem"><svg class="i16"><use href="#disk"/></svg>Local Disk (D:)</a>
          <a href="#" class="titem"><svg class="i16"><use href="#disk"/></svg>Local Disk (E:)</a>
          <a href="#" class="titem"><svg class="i16"><use href="#disk"/></svg>Local Disk (F:)</a>
        </div>
        <div class="tgroup"><a href="#" class="titem top"><svg class="i16"><use href="#network"/></svg>Network</a></div>
      </nav>
      <div class="scroll"><svg class="i8"><use href="#chevu"/></svg><div class="thumb"></div><svg class="i8"><use href="#chevd"/></svg></div>
      <div class="files">
        <table>
          <colgroup><col class="c1"><col class="c2"><col class="c3"><col class="c4"></colgroup>
          <thead><tr><th class="sorted">Name<svg class="i8 sort"><use href="#thinu"/></svg></th><th>Date modified</th><th>Type</th><th>Size</th></tr></thead>
          <tbody>
          <tr><td><svg class="i16"><use href="#folder"/></svg>.vs</td><td>6/25/2021 5:15 PM</td><td>File folder</td><td></td></tr>
          <tr><td><svg class="i16"><use href="#folder"/></svg>uploads</td><td>6/26/2021 1:37 AM</td><td>File folder</td><td></td></tr>
          <tr><td><svg class="i16"><use href="#vscode"/></svg>Change Password.php</td><td>6/22/2021 12:11 AM</td><td>PHP File</td><td>4 KB</td></tr>
          <tr><td><svg class="i16"><use href="#json"/></svg>data.json</td><td>6/26/2021 1:32 AM</td><td>JSON File</td><td>1 KB</td></tr>
          <tr class="sel"><td><svg class="i16"><use href="#vscode"/></svg>Login.php</td><td>6/21/2021 11:55 PM</td><td>PHP File</td><td>3 KB</td></tr>
          <tr><td><svg class="i16"><use href="#vscode"/></svg>Profile.php</td><td>6/22/2021 12:15 AM</td><td>PHP File</td><td>1 KB</td></tr>
          <tr><td><svg class="i16"><use href="#vscode"/></svg>Registration.php</td><td>6/25/2021 5:27 PM</td><td>PHP File</td><td>7 KB</td></tr>
          <tr><td><svg class="i16"><use href="#vscode"/></svg>upload.php</td><td>6/26/2021 1:08 AM</td><td>PHP File</td><td>2 KB</td></tr>
          </tbody>
        </table>
      </div>
    </div>
    <footer class="status"><span>8 items</span><i></i><span>1 item selected&nbsp; 2.79 KB</span><i></i><span class="grow"></span>
      <button class="vbtn on" aria-label="Details view"><svg class="i18"><use href="#details"/></svg></button><button class="vbtn" aria-label="Large icons"><svg class="i14"><use href="#picture"/></svg></button>
    </footer>
  </div>
  <footer class="taskbar">
    <button class="tb48" aria-label="Start"><svg class="i16"><use href="#win"/></svg></button>
    <label class="tsearch"><svg class="i16"><use href="#search"/></svg><input type="text" placeholder="Type here to search" aria-label="Type here to search"></label>
    <button class="tb48" aria-label="Cortana"><svg class="i16"><use href="#cortana"/></svg></button>
    <button class="tb48" aria-label="Task view"><svg class="i16"><use href="#taskview"/></svg></button>
    <div class="tapps">
      <button aria-label="Edge"><svg class="i24"><use href="#edge"/></svg></button>
      <button class="run active" aria-label="Chrome"><svg class="i26"><use href="#chrome"/></svg></button>
      <button aria-label="Settings"><svg class="i18"><use href="#gear"/></svg></button>
      <button class="run" aria-label="Explorer"><svg class="i24"><use href="#explorer"/></svg></button>
      <button aria-label="Your Phone"><svg class="i24"><use href="#phone"/></svg></button>
      <button class="run" aria-label="Notepad"><svg class="i24"><use href="#notepad"/></svg></button>
      <button class="run" aria-label="Teams"><svg class="i24"><use href="#teams"/></svg></button>
      <button class="run" aria-label="Foxit"><svg class="i24"><use href="#foxit"/></svg></button>
      <button class="run" aria-label="VS Code"><svg class="i24"><use href="#vscode"/></svg></button>
      <button class="run" aria-label="XAMPP"><svg class="i24"><use href="#xampp"/></svg></button>
      <button class="run" aria-label="Visual Studio"><svg class="i24"><use href="#vs"/></svg></button>
    </div>
    <span class="grow"></span>
    <div class="tray">
      <svg class="i20"><use href="#moon"/></svg><span class="temp">29°C</span>
      <svg class="i12 wide"><use href="#thinu"/></svg>
      <svg class="i16"><use href="#dropred"/></svg><svg class="i16"><use href="#onedrive"/></svg><svg class="i16"><use href="#wifi"/></svg><svg class="i16"><use href="#battery"/></svg><svg class="i16"><use href="#volume"/></svg>
      <span class="lang">ENG</span>
    </div>
    <div class="clock">2:18 AM<br>6/26/2021</div>
    <button class="tb48 nbtn" aria-label="Notifications"><svg class="i24"><use href="#notif"/></svg></button>
    <span class="peek"></span>
  </footer>
</section>

<section class="screen" aria-label="Browser">
  <div class="browser">
    <header class="tabs">
      <div class="tset wide35">
        <button aria-label="Forms"><svg class="i16"><use href="#forms"/></svg></button>
        <button aria-label="Translate"><svg class="i16"><use href="#translate"/></svg></button>
        <button aria-label="Google"><svg class="i16"><use href="#google"/></svg></button>
        <button aria-label="Bangla"><svg class="i16"><use href="#bangla"/></svg></button>
        <button aria-label="Google"><svg class="i16"><use href="#google"/></svg></button>
        <button aria-label="Course"><svg class="i16"><use href="#cap"/></svg></button>
        <button aria-label="Swirl"><svg class="i16"><use href="#swirl"/></svg></button>
        <button aria-label="GitHub"><svg class="i16"><use href="#github"/></svg></button>
        <button aria-label="Site"><svg class="i16"><use href="#globe"/></svg></button>
        <button aria-label="Google"><svg class="i16"><use href="#google"/></svg></button>
        <button aria-label="W3"><svg class="i16"><use href="#w3"/></svg></button>
      </div>
      <div class="tset">
        <button aria-label="YouTube"><svg class="i16"><use href="#youtube"/></svg></button>
        <button aria-label="Google"><svg class="i16"><use href="#google"/></svg></button>
        <button aria-label="Google"><svg class="i16"><use href="#google"/></svg></button>
        <button aria-label="W3"><svg class="i16"><use href="#w3"/></svg></button>
        <button aria-label="w3"><svg class="i16"><use href="#ww3"/></svg></button>
        <button aria-label="w3"><svg class="i16"><use href="#ww3"/></svg></button>
        <button aria-label="w3"><svg class="i16"><use href="#ww3"/></svg></button>
        <button aria-label="w3"><svg class="i16"><use href="#ww3"/></svg></button>
        <button aria-label="W3"><svg class="i16"><use href="#w3"/></svg></button>
        <button aria-label="w3"><svg class="i16"><use href="#ww3"/></svg></button>
        <button aria-label="W3"><svg class="i16"><use href="#w3"/></svg></button>
        <button aria-label="Bangla"><svg class="i16"><use href="#bangla"/></svg></button>
        <button aria-label="Forms"><svg class="i16"><use href="#forms"/></svg></button>
        <button aria-label="Google"><svg class="i16"><use href="#google"/></svg></button>
        <button aria-label="W3"><svg class="i16"><use href="#w3"/></svg></button>
        <button aria-label="W3"><svg class="i16"><use href="#w3"/></svg></button>
        <button aria-label="Google"><svg class="i16"><use href="#google"/></svg></button>
        <button class="nosep" aria-label="Udemy"><svg class="i16"><use href="#udemy"/></svg></button>
        <button class="cur" aria-label="Close tab"><svg class="i10"><use href="#tabx"/></svg></button>
        <button aria-label="YouTube"><svg class="i16"><use href="#youtube"/></svg></button>
        <button aria-label="Excel"><svg class="i16"><use href="#excel"/></svg></button>
      </div>
      <button class="newtab" aria-label="New tab"><svg class="i12"><use href="#plus"/></svg></button>
      <span class="grow"></span>
      <button class="wbtn" aria-label="Tab search"><svg class="i16"><use href="#dropdown"/></svg></button>
      <button class="wbtn" aria-label="Minimize"><svg class="i10"><use href="#min"/></svg></button>
      <button class="wbtn" aria-label="Restore"><svg class="i10"><use href="#restore"/></svg></button>
      <button class="wbtn" aria-label="Close"><svg class="i10"><use href="#close"/></svg></button>
    </header>
    <div class="toolbar">
      <button class="bare" aria-label="Back"><svg class="i16"><use href="#arrow"/></svg></button>
      <button class="bare dim" aria-label="Forward"><svg class="i16 flip"><use href="#arrow"/></svg></button>
      <button class="bare" aria-label="Reload"><svg class="i16"><use href="#reload"/></svg></button>
      <button class="bare" aria-label="Home"><svg class="i16"><use href="#home"/></svg></button>
      <div class="omni"><svg class="i16"><use href="#info"/></svg><span class="url"><b>localhost</b>/Labtask3/Change%20Password.php</span><span class="grow"></span><svg class="i16"><use href="#zoomin"/></svg><svg class="i16"><use href="#star"/></svg></div>
      <button class="bare" aria-label="Translate"><svg class="i16"><use href="#translate"/></svg></button>
      <button class="bare" aria-label="Grammarly"><svg class="i16"><use href="#grammarly"/></svg></button>
      <button class="bare" aria-label="Download manager"><svg class="i16"><use href="#idm"/></svg></button>
      <button class="bare" aria-label="Extensions"><svg class="i16"><use href="#puzzle"/></svg></button>
      <button class="bare" aria-label="Media"><svg class="i16"><use href="#playlist"/></svg></button>
      <button class="bare" aria-label="Profile"><svg class="i22"><use href="#avatar"/></svg></button>
      <button class="bare" aria-label="Menu"><svg class="i16"><use href="#dots"/></svg></button>
    </div>
    <nav class="marks">
      <a href="#"><svg class="i16"><use href="#apps"/></svg>Apps</a>
      <a href="#"><svg class="i16"><use href="#bfolder"/></svg>Coding ground.</a>
      <a href="#"><svg class="i16"><use href="#bfolder"/></svg>New folder</a>
      <a href="#"><svg class="i16"><use href="#resident"/></svg>Resident Evil: Vende...</a>
      <a href="#"><svg class="i16"><use href="#gmail"/></svg>Gmail</a>
      <a href="#"><svg class="i16"><use href="#youtube"/></svg>YouTube</a>
      <a href="#"><svg class="i16"><use href="#maps"/></svg>Maps</a>
      <a href="#"><svg class="i16"><use href="#oracle"/></svg>Oracle 11g Ex</a>
      <a href="#"><svg class="i16"><use href="#autocad"/></svg>AutoCAD 2007 Free...</a>
      <span class="grow"></span>
      <button class="more" aria-label="More bookmarks">»</button><i></i>
      <a href="#"><svg class="i16"><use href="#bfolder"/></svg>Other bookmarks</a><i></i>
      <a href="#"><svg class="i16"><use href="#list"/></svg>Reading list</a>
    </nav>
    <article class="page">
      <form>
        <h3>CHANGE PASSWORD</h3>
        <div class="fields">
          <label for="cur">Current Password :</label><input id="cur" type="password"><span class="req">*</span>
          <label for="new">New Password :</label><input id="new" type="password"><span class="req">*</span>
          <label for="re" class="red">Retype New Password :</label><input id="re" type="password"><span class="req">*</span>
          <button class="submit" type="button">Submit</button>
        </div>
      </form>
    </article>
  </div>
  <footer class="taskbar second">
    <button class="tb48" aria-label="Start"><svg class="i16"><use href="#win"/></svg></button>
    <button class="tb48" aria-label="Search"><svg class="i16 white"><use href="#search"/></svg></button>
    <button class="tb48" aria-label="Cortana"><svg class="i16"><use href="#cortana"/></svg></button>
    <button class="tb48" aria-label="Task view"><svg class="i16"><use href="#taskview"/></svg></button>
    <div class="tapps">
      <button aria-label="Edge"><svg class="i24"><use href="#edge"/></svg></button>
      <button class="run active" aria-label="Chrome"><svg class="i26"><use href="#chrome"/></svg></button>
      <button aria-label="Settings"><svg class="i18"><use href="#gear"/></svg></button>
      <button class="run" aria-label="Explorer"><svg class="i24"><use href="#explorer"/></svg></button>
      <button aria-label="Your Phone"><svg class="i24"><use href="#phone"/></svg></button>
      <button class="run" aria-label="Notepad"><svg class="i24"><use href="#notepad"/></svg></button>
      <button class="run" aria-label="Teams"><svg class="i24"><use href="#teams"/></svg></button>
      <button class="run" aria-label="Foxit"><svg class="i24"><use href="#foxit"/></svg></button>
      <button class="run" aria-label="VS Code"><svg class="i24"><use href="#vscode"/></svg></button>
      <button class="run" aria-label="XAMPP"><svg class="i24"><use href="#xampp"/></svg></button>
      <button class="run" aria-label="Visual Studio"><svg class="i24"><use href="#vs"/></svg></button>
    </div>
    <span class="grow"></span>
    <div class="clock">2:18 AM<br>6/26/2021</div>
  </footer>
</section>
</main>
</body>
</html>
```

FILE: styles.css
```css
* { box-sizing: border-box; }
body { margin: 0; font: 11px/16px "Open Sans", "Noto Sans", sans-serif; color: #fff; }
button { font: inherit; color: inherit; background: none; border: 0; padding: 0; margin: 0; }
input { font: inherit; color: inherit; background: none; border: 0; padding: 0; min-width: 0; outline: 0; }
a { color: inherit; text-decoration: none; }
svg { display: block; flex: none; }
.paints { position: absolute; width: 0; height: 0; }
.sprite { display: none; }
.grow { flex: 1; }
.i6 { width: 6px; height: 6px; }
.i8 { width: 8px; height: 8px; }
.i10 { width: 10px; height: 10px; }
.i12 { width: 12px; height: 12px; }
.i14 { width: 14px; height: 14px; }
.i16 { width: 16px; height: 16px; }
.i18 { width: 18px; height: 18px; }
.i20 { width: 20px; height: 20px; }
.i22 { width: 22px; height: 22px; }
.i24 { width: 24px; height: 24px; }
.i26 { width: 26px; height: 26px; }
.i32 { width: 32px; height: 32px; }
.flip { transform: scaleX(-1); }
.up { transform: rotate(90deg); }
.white, .light { color: #fff; }
.bare { display: flex; align-items: center; justify-content: center; }

.desk { display: grid; grid-template-columns: 1fr 1fr; height: 100vh; }
.screen { display: flex; flex-direction: column; min-width: 0; min-height: 0; }
.explorer, .browser { flex: 1; display: flex; flex-direction: column; min-height: 0; }
.explorer { background: #202020; }

.titlebar { display: flex; align-items: center; height: 23px; padding-left: 1px; background: #2b2b2b; color: #9b9b9b; }
.titlebar .bar2 { width: 3px; height: 13px; border: 1px solid #5c5c5c; border-width: 0 1px; margin: 0 8px 0 5px; }
.titlebar .i8 { margin: 3px 0 0 8px; }
.titlebar .i8 + .bar2 { margin-right: 6px; }
.titlebar .i16 + .i16 { margin-left: 6px; }
.wbtn { width: 46px; height: 20px; display: flex; align-items: center; justify-content: center; }
.explorer .wbtn:last-child { margin-right: 2px; }

.rtabs { display: flex; height: 24px; background: #000; border-bottom: 1px solid #2f2f2f; padding-right: 3px; }
.rtab { height: 23px; }
.file { width: 56px; background: #0067b8; }
.home { width: 58px; background: #202020; height: 24px; }
.share { width: 60px; }
.view { width: 52px; }
.rtabs .bare { margin-left: 9px; color: #ccc; }

.ribbon { display: flex; height: 92px; border-bottom: 1px solid #2f2f2f; }
.rgroup { display: flex; flex-direction: column; position: relative; }
.rbody { display: flex; height: 72px; margin-top: 2px; padding-top: 5px; border-right: 1px solid #454545; }
.rlabel { text-align: center; color: #b4b4b4; border-right: 1px solid #191919; height: 14px; }
.g-clip { width: 263px; } .g-clip .rbody { padding-left: 6px; }
.g-org { width: 191px; } .g-org .rbody { padding-left: 3px; }
.g-new { width: 145px; } .g-new .rbody { padding-left: 3px; }
.g-open { width: 133px; } .g-open .rbody { padding-left: 5px; }
.g-sel { width: 115px; } .g-sel .rbody { padding-left: 7px; }
.big { width: 42px; line-height: 13px; display: block; align-self: flex-start; white-space: nowrap; }
.big .i32 { margin: 0 auto 4px; }
.big .i6 { display: inline-block; vertical-align: 1px; }
.big .pad { padding: 4px; color: #85878a; }
.w66 { width: 66px; } .w48 { width: 48px; } .w54 { width: 54px; }
.off { color: #b0b0b0; }
.vsep { width: 1px; height: 55px; background: #555; margin: 2px 2px 0 5px; }
.smalls { display: flex; flex-direction: column; margin: -3px 0 0 4px; }
.g-sel .smalls { margin-left: 0; }
.small { height: 22px; display: flex; align-items: center; gap: 4px; white-space: nowrap; }

.navbar { display: flex; align-items: center; height: 42px; background: #191919; padding: 0 12px 2px 12px; }
.navbtns { display: flex; align-items: center; gap: 15px; width: 94px; }
.navbtns .bare:nth-child(3) { margin: 0 -4px 0 -3px; }
.navbar .dim { color: #777; }
.address { flex: 1; display: flex; align-items: center; height: 30px; border: 1px solid #535353; padding: 0 8px 0 3px; color: #e8e8e8; }
.address .i10 { color: #999; margin: 0 7px 0 3px; }
.address a + .i10 { margin-left: 6px; }
.address .bare .i10 { margin: 0 20px 0 0; }
.address .bare { color: #999; }
.find { width: 202px; height: 30px; margin-left: 12px; border: 1px solid #535353; display: flex; align-items: center; gap: 14px; padding-left: 14px; color: #777; }
.find input { width: 140px; }
input::placeholder { color: inherit; opacity: 1; }

.panes { flex: 1; display: flex; min-height: 0; }
.tree { width: 140px; background: #191919; padding: 16px 1px 0; overflow: hidden; }
.tgroup { margin-bottom: 8px; }
.titem { display: flex; align-items: center; gap: 5px; height: 24px; padding: 0 2px 0 31px; white-space: nowrap; }
.titem.top { padding: 0 0 0 23px; }
.titem.sel { background: #333; height: 22px; margin: 1px 0; }
.tpin { margin-left: auto; color: #9a9da0; }
.scroll { width: 19px; background: #171717; border-right: 1px solid #333; display: flex; flex-direction: column; align-items: flex-start; }
.scroll svg { margin: 5px 4px; color: #888; }
.scroll svg:last-child { margin: 13px 4px 4px; }
.thumb { width: 15px; flex: 1; background: #4d4d4d; }
.files { flex: 1; padding-left: 16px; }
table { table-layout: fixed; width: 600px; border-collapse: separate; border-spacing: 0; }
.c1 { width: 257px; } .c2 { width: 144px; } .c3 { width: 120px; } .c4 { width: 79px; }
th { position: relative; font-weight: 400; text-align: left; height: 25px; padding: 0 0 0 6px; border-right: 1px solid #636363; color: #dedede; }
.sorted { padding-left: 2px; }
.sort { position: absolute; left: 123px; top: 0; color: #aaa; }
thead::after { content: ""; display: block; height: 7px; }
td { height: 21px; padding: 0 0 0 6px; border-bottom: 1px solid transparent; background-clip: padding-box; color: #dedede; white-space: nowrap; }
td:first-child { padding-left: 3px; color: #fff; }
td svg { float: left; margin-right: 4px; }
td:last-child { text-align: right; padding-right: 3px; border-right: 4px solid transparent; }
tbody .sel td { background-color: #333; }

.status { display: flex; align-items: center; height: 23px; background: #333; padding-left: 14px; color: #ddd; }
.status i { width: 1px; height: 11px; background: #fff; margin: 0 11px 0 10px; }
.vbtn { width: 22px; height: 23px; display: flex; align-items: center; justify-content: center; border: 1px solid transparent; }
.vbtn.on { background: #666; border-color: #888; }
.vbtn:last-child { margin-right: 4px; }

.taskbar { display: flex; height: 40px; background: linear-gradient(90deg, #393533, #3b3838 40%, #373a3a 58%, #2d2c22 78%, #362f28 93%, #3a4148); }
.second { background: linear-gradient(90deg, #393533, #3b3838 40%, #2d2c22 70%, #362f28); }
.tb48 { width: 48px; display: flex; align-items: center; justify-content: center; }
.tsearch { width: 344px; border: 1px solid #5b5b5b; background: #333; display: flex; align-items: center; gap: 12px; padding-left: 11px; color: #fff; font-size: 14px; }
.tsearch input { width: 260px; color: #d0d0d0; }
.tapps { display: flex; width: 482px; margin-left: 2px; }
.tapps button { flex: 1; display: flex; align-items: center; justify-content: center; border: solid transparent; border-width: 2px 0; position: relative; }
.tapps .run::after { content: ""; position: absolute; left: 4px; right: 4px; bottom: -2px; height: 2px; background: #76b9ed; }
.tapps .active { background: #656362; border-color: #656362; }
.tapps .active::after { left: 0; right: 0; }
.tray { display: flex; align-items: center; gap: 8px; }
.temp { font-size: 12px; margin-right: 9px; }
.lang { margin-left: 1px; }
.tray .wide { margin: 0 2px; }
.clock { width: 76px; text-align: center; line-height: 18px; padding-top: 2px; white-space: nowrap; }
.nbtn { width: 36px; margin-left: 3px; }
.peek { width: 5px; border-left: 1px solid #8a8a8a; margin-left: 4px; }
.second .tapps { width: 540px; }
.second .clock { width: 66px; }

.browser { background: #fff; color: #202124; }
.tabs { display: flex; height: 34px; background: #ffdd5c; padding-left: 8px; }
.tset { display: flex; }
.tset button { width: 34px; padding: 0 3px 0 0; position: relative; display: flex; align-items: center; justify-content: center; }
.wide35 button { width: 35px; }
.tset button::after { content: ""; position: absolute; right: 0; top: 8px; width: 1px; height: 19px; background: #a48f3e; }
.tset .nosep::after, .tset .cur::after { display: none; }
.tset .cur { background: #fff; border-radius: 8px 8px 0 0; padding: 0 0 0 3px; width: 35px; }
.newtab { width: 44px; display: flex; align-items: center; justify-content: center; }
.tabs .wbtn { height: 29px; color: #111; }
.tabs .wbtn .i16 { margin-top: 5px; }
.toolbar { display: flex; align-items: center; height: 36px; padding: 0 5px 0 6px; }
.toolbar .bare { width: 32px; height: 28px; }
.toolbar .dim { color: #9a9a9a; }
.omni { flex: 1; height: 28px; margin: 0 6px; border-radius: 14px; background: #e0e0e0; display: flex; align-items: center; gap: 16px; padding: 0 10px; color: #5f6368; font-size: 13px; }
.omni .url { margin-left: -8px; }
.omni b { font-weight: 400; color: #202124; }
.marks { display: flex; align-items: center; height: 35px; padding: 0 15px 2px 14px; gap: 17px; border-bottom: 1px solid #a9a9a9; white-space: nowrap; }
.toolbar + .marks { height: 33px; }
.marks a { display: flex; align-items: center; gap: 8px; }
.marks i { width: 1px; height: 16px; background: #bbb; margin: 0 -6px; }
.more { font-size: 17px; font-weight: 600; padding-bottom: 3px; }

.page { flex: 1; padding: 34px 84px; font: 20px/27px "Liberation Serif", "Times New Roman", serif; color: #000; }
.page form { width: 465px; }
.page h3 { margin: 0 0 24px; font-size: 23px; line-height: 26px; }
.fields { display: grid; grid-template-columns: 239px 206px 10px; column-gap: 5px; row-gap: 23px; }
.fields label { text-align: right; font-weight: 700; }
.fields .red, .req { color: #f00; }
.fields input { height: 27px; border: 1px solid #767676; border-radius: 2px; background: #fff; }
.submit { grid-column: 2 / 4; justify-self: end; width: 72px; height: 28px; border: 1px solid #767676; border-radius: 3px; background: #efefef; font: 17px "Liberation Sans", Arial, sans-serif; }
```
